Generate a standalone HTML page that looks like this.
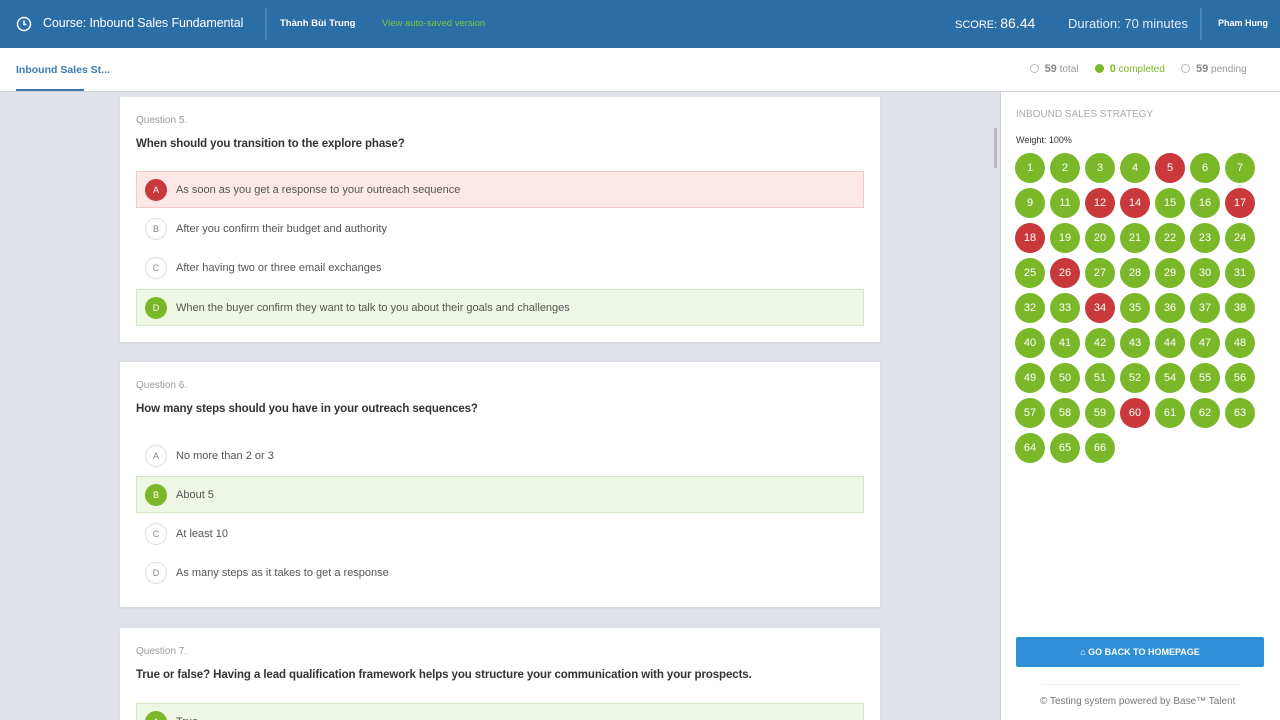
<!DOCTYPE html>
<html style="overflow:hidden;height:720px"><head><meta charset="utf-8"><style>
*{box-sizing:border-box;margin:0;padding:0}
body{width:1280px;height:720px;overflow:hidden;background:#dfe2e8;font-family:"Liberation Sans","Noto Sans CJK SC",sans-serif;position:relative}
.hdr{position:absolute;left:0;top:0;width:1280px;height:48px;background:#2b6ea6;color:#fff}
.hdr div{position:absolute;white-space:nowrap}
.sub{position:absolute;left:0;top:48px;width:1280px;height:44px;background:#fff;border-bottom:1px solid #cfd3d8}
.card{position:absolute;left:120px;width:760px;background:#fff;box-shadow:0 1px 2px rgba(0,0,0,.08);overflow:hidden}
.qn{position:absolute;left:16px;font-size:10px;color:#999}
.qt{position:absolute;left:16px;font-size:11.5px;color:#333;font-weight:bold;white-space:nowrap;letter-spacing:-0.1px}
.opt{position:absolute;left:16px;width:728px;height:37px;font-size:11px;color:#555;border:1px solid transparent}
.opt span.c{position:absolute;left:8px;top:7px;width:22px;height:22px;border-radius:50%;border:1px solid #ddd;font-size:9px;color:#888;text-align:center;line-height:20px;background:#fff}
.opt span.t{position:absolute;left:39px;top:12px;white-space:nowrap}
.red{background:#fde8e8;border-color:#f3c9c9}
.red span.c{background:#c9393b;border-color:#c9393b;color:#fff}
.grn{background:#eef6e4;border-color:#d6e8c3}
.grn span.c{background:#7ab829;border-color:#7ab829;color:#fff}
.side{position:absolute;left:1000px;top:92px;width:280px;height:628px;background:#fff;border-left:1px solid #cfd3d8}
.b{position:absolute;width:30px;height:30px;border-radius:50%;background:#7ab829;color:#fff;font-size:11px;text-align:center;line-height:30px}
.b.r{background:#c9393b}
</style></head><body>
<div class="hdr">
<svg style="position:absolute;left:16px;top:16px" width="16" height="16" viewBox="0 0 16 16"><circle cx="8" cy="8" r="6.5" fill="none" stroke="#fff" stroke-width="1.5"/><path d="M8 4.5V8.5H10.5" fill="none" stroke="#fff" stroke-width="1.5"/></svg>
<div style="left:43px;top:16px;font-size:12.5px;letter-spacing:-0.1px">Course: Inbound Sales Fundamental</div>
<div style="left:265px;top:8px;width:2px;height:32px;background:#4a88bb"></div>
<div style="left:280px;top:18px;font-size:9.5px;font-weight:bold">Thành Bùi Trung</div>
<div style="left:382px;top:18px;font-size:9.5px;color:#7ac943">View auto-saved version</div>
<div style="left:955px;top:15px;font-size:11px">SCORE: <b style="font-size:14px;font-weight:normal">86.44</b></div>
<div style="left:1068px;top:16px;font-size:13px;color:#e0ebf5">Duration: 70 minutes</div>
<div style="left:1200px;top:8px;width:2px;height:32px;background:#4a88bb"></div>
<div style="left:1218px;top:18px;font-size:9px;font-weight:bold">Pham Hung</div>
</div>
<div class="sub">
<div style="position:absolute;left:16px;top:16px;font-size:10.5px;font-weight:bold;color:#3a7ab0">Inbound Sales St...</div>
<div style="position:absolute;left:16px;top:41px;width:68px;height:2px;background:#3a7ab0"></div>
<div style="position:absolute;left:1030px;top:15px;font-size:10px;color:#999;white-space:nowrap">
<span style="display:inline-block;width:9px;height:9px;border:1px solid #bbb;border-radius:50%;vertical-align:-1px"></span>&nbsp; <b style="color:#888;font-size:11px">59</b> total &nbsp;&nbsp;&nbsp;&nbsp; <span style="display:inline-block;width:9px;height:9px;background:#7ab829;border-radius:50%;vertical-align:-1px"></span>&nbsp; <b style="color:#7ab829;font-size:11px">0</b> <span style="color:#7ab829">completed</span> &nbsp;&nbsp;&nbsp;&nbsp; <span style="display:inline-block;width:9px;height:9px;border:1px solid #bbb;border-radius:50%;vertical-align:-1px"></span>&nbsp; <b style="color:#888;font-size:11px">59</b> pending</div>
</div>
<div style="position:absolute;left:994px;top:128px;width:3px;height:40px;background:#bbb"></div>

<div class="card" style="top:97px;height:245px">
<div class="qn" style="top:18px">Question 5.</div>
<div class="qt" style="top:41px">When should you transition to the explore phase?</div>
<div class="opt red" style="top:74px"><span class="c">A</span><span class="t">As soon as you get a response to your outreach sequence</span></div>
<div class="opt" style="top:113px"><span class="c">B</span><span class="t">After you confirm their budget and authority</span></div>
<div class="opt" style="top:152px"><span class="c">C</span><span class="t">After having two or three email exchanges</span></div>
<div class="opt grn" style="top:192px"><span class="c">D</span><span class="t">When the buyer confirm they want to talk to you about their goals and challenges</span></div>
</div>
<div class="card" style="top:362px;height:245px">
<div class="qn" style="top:18px">Question 6.</div>
<div class="qt" style="top:41px">How many steps should you have in your outreach sequences?</div>
<div class="opt" style="top:75px"><span class="c">A</span><span class="t">No more than 2 or 3</span></div>
<div class="opt grn" style="top:114px"><span class="c">B</span><span class="t">About 5</span></div>
<div class="opt" style="top:153px"><span class="c">C</span><span class="t">At least 10</span></div>
<div class="opt" style="top:192px"><span class="c">D</span><span class="t">As many steps as it takes to get a response</span></div>
</div>
<div class="card" style="top:628px;height:100px">
<div class="qn" style="top:18px">Question 7.</div>
<div class="qt" style="top:41px">True or false? Having a lead qualification framework helps you structure your communication with your prospects.</div>
<div class="opt grn" style="top:75px"><span class="c">A</span><span class="t">True</span></div>
</div>

<div class="side">
<div style="position:absolute;left:15px;top:17px;font-size:10px;color:#aaa">INBOUND SALES STRATEGY</div>
<div style="position:absolute;left:15px;top:43px;font-size:9px;color:#333">Weight: 100%</div>
<div id="g"></div>
<div style="position:absolute;left:15px;top:545px;width:248px;height:30px;background:#2f8fd6;border-radius:2px;color:#fff;font-size:9px;font-weight:bold;text-align:center;line-height:30px">&#8962; GO BACK TO HOMEPAGE</div>
<div style="position:absolute;left:40px;top:592px;width:200px;border-top:1px solid #eee"></div>
<div style="position:absolute;left:39px;top:604px;font-size:10px;color:#777">© Testing system powered by Base™ Talent</div>
</div>
<script>
var seq=[1,2,3,4,5,6,7,9,11,12,14,15,16,17,18,19,20,21,22,23,24,25,26,27,28,29,30,31,32,33,34,35,36,37,38,40,41,42,43,44,47,48,49,50,51,52,54,55,56,57,58,59,60,61,62,63,64,65,66];
var red=[5,12,14,17,18,26,34,60];var h='';
seq.forEach(function(n,i){var r=Math.floor(i/7),c=i%7;h+='<div class="b'+(red.indexOf(n)>=0?' r':'')+'" style="left:'+(14+c*35)+'px;top:'+(61+r*35)+'px">'+n+'</div>';});
document.getElementById('g').innerHTML=h;
</script>
</body></html>
